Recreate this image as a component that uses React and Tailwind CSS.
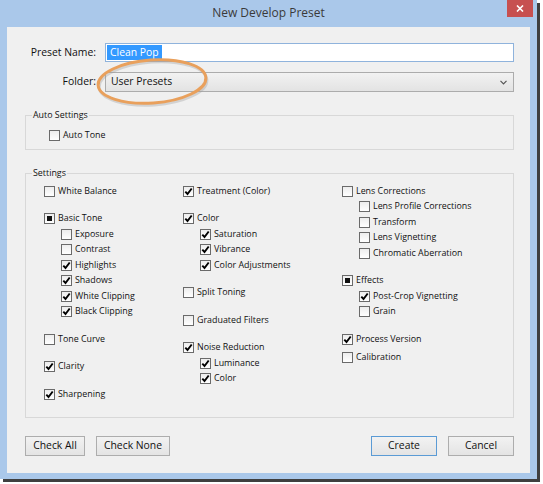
import React from "react";

const Box = ({ state }) => (
  <span className="w-[11px] h-[11px] border border-[#6a6a6a] bg-linear-to-b from-[#ededed] to-white flex items-center justify-center shrink-0">
    {state === "on" && (
      <svg width="9" height="9" viewBox="0 0 9 9">
        <path d="M1.3 4.6 L3.5 7 L7.7 1.5" fill="none" stroke="#000" strokeWidth="1.9" />
      </svg>
    )}
    {state === "mixed" && <span className="w-[5px] h-[5px] bg-[#111]" />}
  </span>
);

const Row = ({ label, state, sub, extra }) => (
  <div className={`flex items-center h-[15.5px] ${sub ? "pl-[17px]" : ""} ${extra || ""}`}>
    <Box state={state} />
    <span className="ml-[3px] text-[8.9px] leading-none text-[#111] whitespace-nowrap">{label}</span>
  </div>
);

const col1 = [
  [["White Balance", "off"]],
  [["Basic Tone", "mixed"], ["Exposure", "off", 1], ["Contrast", "off", 1], ["Highlights", "on", 1], ["Shadows", "on", 1], ["White Clipping", "on", 1], ["Black Clipping", "on", 1]],
  [["Tone Curve", "off"]],
  [["Clarity", "on"]],
  [["Sharpening", "on"]],
];
const col2 = [
  [["Treatment (Color)", "on"]],
  [["Color", "on"], ["Saturation", "on", 1], ["Vibrance", "on", 1], ["Color Adjustments", "on", 1]],
  [["Split Toning", "off"]],
  [["Graduated Filters", "off"]],
  [["Noise Reduction", "on"], ["Luminance", "on", 1], ["Color", "on", 1]],
];
const col3 = [
  [["Lens Corrections", "off"], ["Lens Profile Corrections", "off", 1], ["Transform", "off", 1], ["Lens Vignetting", "off", 1], ["Chromatic Aberration", "off", 1]],
  [["Effects", "mixed"], ["Post-Crop Vignetting", "on", 1], ["Grain", "off", 1]],
  [["Process Version", "on"], ["Calibration", "off", 0, "mt-[2.5px]"]],
];

const Column = ({ groups, className }) => (
  <div className={`flex flex-col gap-[12px] ${className}`}>
    {groups.map((g, i) => (
      <div key={i} className="flex flex-col">
        {g.map(([l, s, sub, extra], j) => (
          <Row key={j} label={l} state={s} sub={sub} extra={extra} />
        ))}
      </div>
    ))}
  </div>
);

const Button = ({ children, w, primary }) => (
  <div
    className={`${w} h-[20px] flex items-center justify-center text-[10.4px] text-[#111] border ${
      primary ? "border-[#5b9bd5]" : "border-[#adadad]"
    } bg-linear-to-b from-[#f2f2f2] to-[#e4e4e4]`}
  >
    {children}
  </div>
);

export default function App() {
  return (
    <div className="w-[543px] h-[484px] bg-white relative font-['Open_Sans','Noto_Sans',sans-serif]">
      <div className="w-[537px] h-[479px] bg-[#aac8ea] shadow-[3px_3px_0_0_#3f3f3f] flex flex-col">
        <div className="h-[27px] relative flex items-center justify-center">
          <span className="text-[12px] text-[#3a3a3a] -mt-[1px]">New Develop Preset</span>
          <div className="absolute top-0 right-[4px] w-[26px] h-[17px] bg-[#c75050] flex items-center justify-center">
            <svg width="8" height="7" viewBox="0 0 8 7">
              <path d="M1 0.5 L7 6.5 M7 0.5 L1 6.5" stroke="#fff" strokeWidth="1.6" />
            </svg>
          </div>
        </div>
        <div className="mx-[7px] h-[446px] bg-[#f0f0f0] pl-[18px] pr-[16px] pt-[16px] flex flex-col">
          <div className="flex items-center gap-[9px]">
            <div className="w-[71px] text-right text-[10.4px] text-[#111]">Preset Name:</div>
            <div className="flex-1 h-[19px] bg-white border border-[#8fb3dc] flex items-center pl-[1px]">
              <span className="bg-[#3399ff] text-white text-[10.4px] leading-[15px] px-[3px]">Clean Pop</span>
            </div>
          </div>
          <div className="flex items-center gap-[9px] mt-[10px]">
            <div className="w-[71px] text-right text-[10.4px] text-[#111]">Folder:</div>
            <div className="flex-1 h-[20px] border border-[#acacac] bg-linear-to-b from-[#f2f2f2] to-[#e3e3e3] flex items-center pl-[5px] pr-[6px]">
              <span className="flex-1 text-[10.4px] text-[#111]">User Presets</span>
              <svg width="7" height="5" viewBox="0 0 7 5">
                <path d="M0.5 0.8 L3.5 3.8 L6.5 0.8" fill="none" stroke="#555" strokeWidth="1.2" />
              </svg>
            </div>
          </div>

          <fieldset className="mt-[17px] border border-[#d8d8d8] px-[6px] pt-[6.25px] pb-[6.25px]">
            <legend className="px-[1px] text-[8.9px] leading-[12px] text-[#111]">Auto Settings</legend>
            <div className="pl-[17px]">
              <Row label="Auto Tone" state="off" />
            </div>
          </fieldset>

          <fieldset className="mt-[17px] border border-[#d8d8d8] px-[6px] pt-[4.25px] pb-[15.25px]">
            <legend className="px-[1px] text-[8.9px] leading-[12px] text-[#111]">Settings</legend>
            <div className="flex pl-[12px]">
              <Column groups={col1} className="w-[139px]" />
              <Column groups={col2} className="w-[159px]" />
              <Column groups={col3} className="flex-1" />
            </div>
          </fieldset>

          <div className="mt-[18px] flex items-center">
            <Button w="w-[60px]">Check All</Button>
            <div className="ml-[11px]">
              <Button w="w-[74px]">Check None</Button>
            </div>
            <div className="flex-1" />
            <Button w="w-[66px]" primary>Create</Button>
            <div className="ml-[11px]">
              <Button w="w-[66px]">Cancel</Button>
            </div>
          </div>
        </div>
      </div>

      <svg className="absolute left-[93px] top-[55px] pointer-events-none" width="120" height="54" viewBox="0 0 120 54">
        <ellipse cx="60" cy="28.5" rx="54" ry="21.5" transform="rotate(-4 60 28.5)" fill="none" stroke="#9a9a9a" strokeOpacity="0.35" strokeWidth="3" />
        <ellipse cx="59" cy="26.5" rx="54" ry="21.5" transform="rotate(-4 59 26.5)" fill="none" stroke="#e9a05c" strokeWidth="3" />
      </svg>
    </div>
  );
}
